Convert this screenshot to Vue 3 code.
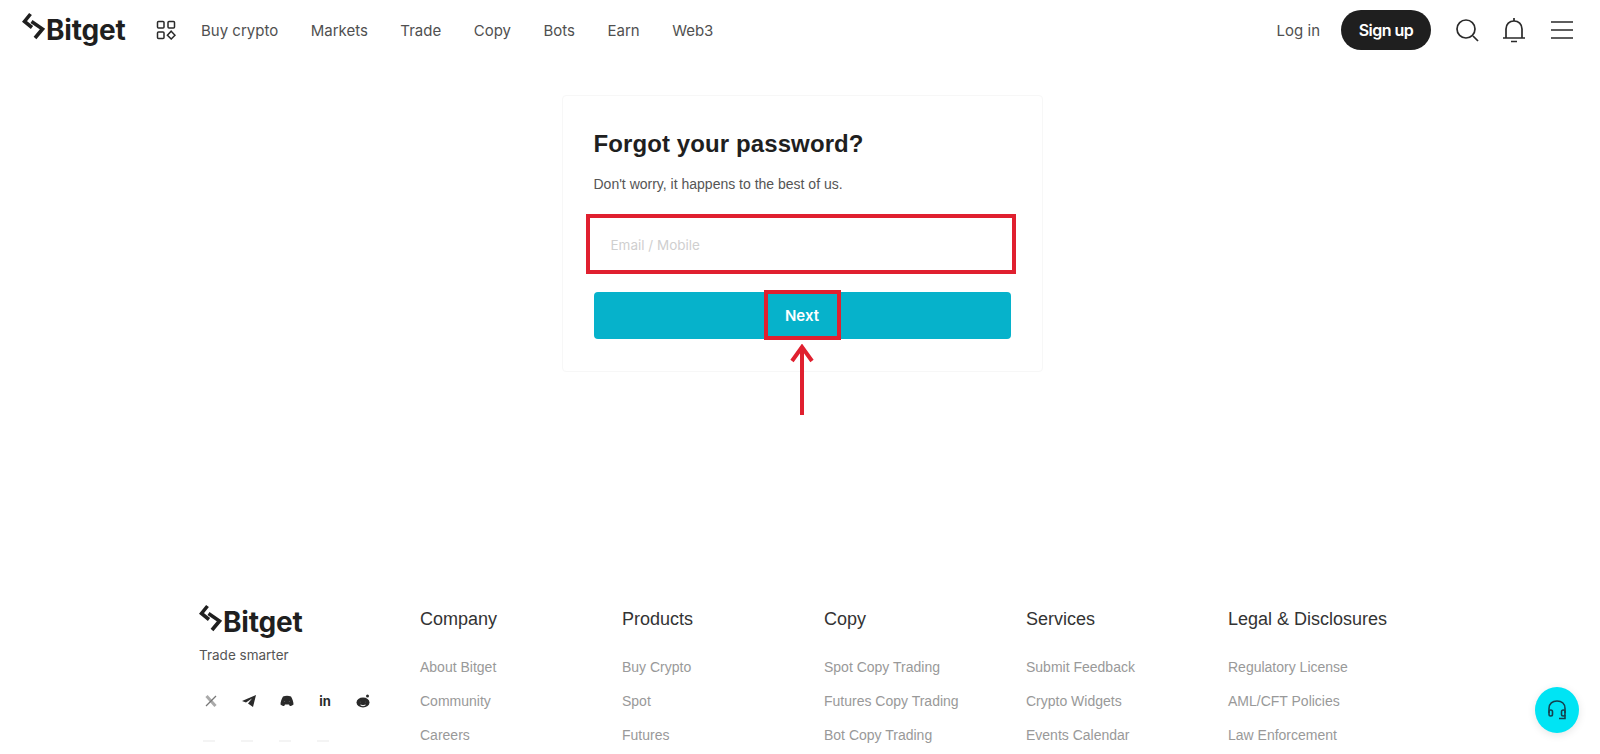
<template>
  <div class="page">
    <header class="topbar">
      <a class="logo">
        <svg class="logo-mark" viewBox="0 0 26 28" width="26" height="28">
          <path d="M8.500 2 L2.500 9.500 L10 15.500" />
          <path d="M9.500 9.500 L20.500 17 L13 26" />
        </svg>
        <span class="logo-text">Bitget</span>
      </a>
      <svg class="grid-icon" viewBox="0 0 20 20" width="20" height="20">
        <rect x="1.500" y="1.500" width="6.500" height="6.500" rx="1" />
        <rect x="12" y="1.500" width="6.500" height="6.500" rx="1" />
        <rect x="1.500" y="12" width="6.500" height="6.500" rx="1" />
        <path d="M15.200 11.200 L19 15.200 L15.200 19 L11.400 15.200 Z" />
      </svg>
      <nav class="nav">
        <a v-for="item in navItems" :key="item">{{ item }}</a>
      </nav>
      <div class="top-right">
        <a class="login">Log in</a>
        <a class="signup">Sign up</a>
        <svg class="top-icon search" viewBox="0 0 24 24" width="24" height="24">
          <circle cx="11" cy="11" r="9" />
          <path d="M18 18 L23 23" />
        </svg>
        <svg class="top-icon bell" viewBox="0 0 26 26" width="26" height="26">
          <path d="M2 21 H24 M5 21 V12 C5 7 8.500 4 13 4 C17.500 4 21 7 21 12 V21" />
          <path d="M13 1 V4 M10 24.500 H16" />
        </svg>
        <svg class="top-icon menu" viewBox="0 0 23 20" width="23" height="20">
          <path d="M0 2 H22 M0 10 H22 M0 18 H22" />
        </svg>
      </div>
    </header>

    <main class="content">
      <section class="card">
        <h1>Forgot your password?</h1>
        <p class="sub">Don't worry, it happens to the best of us.</p>
        <div class="input-wrap">
          <input class="field" placeholder="Email / Mobile" />
          <span class="mark mark-input"></span>
        </div>
        <button class="next">
          Next
          <span class="mark mark-next"></span>
        </button>
        <svg class="arrow" viewBox="0 0 30 72" width="30" height="72">
          <path d="M15 71 V3 M5 17 L15 3 L25 17" />
        </svg>
      </section>
    </main>

    <footer class="footer">
      <div class="brand">
        <a class="logo">
          <svg class="logo-mark" viewBox="0 0 26 28" width="26" height="28">
            <path d="M8.500 2 L2.500 9.500 L10 15.500" />
            <path d="M9.500 9.500 L20.500 17 L13 26" />
          </svg>
          <span class="logo-text">Bitget</span>
        </a>
        <div class="slogan">Trade smarter</div>
        <div class="socials">
          <svg viewBox="0 0 16 16" width="16" height="16" class="soc x"><path class="x-wide" d="M3.500 3 L12.500 13" /><path class="x-thin" d="M13 3 L3 13" /></svg>
          <svg viewBox="0 0 16 16" width="16" height="16" class="soc"><path class="fill" d="M15 2 L1 8 L5 9.500 L11 5.500 L7 10.500 L12 14 Z" /></svg>
          <svg viewBox="0 0 16 16" width="16" height="16" class="soc"><path class="fill" d="M4 3.500 C6.500 2.500 9.500 2.500 12 3.500 C13.500 6 14.500 9 14.500 11.500 C13 12.800 11.800 13 10.800 13 L10 11.500 H6 L5.200 13 C4.200 13 3 12.800 1.500 11.500 C1.500 9 2.500 6 4 3.500 Z" /><circle cx="5.800" cy="8.300" r="1.300" fill="#fff" /><circle cx="10.200" cy="8.300" r="1.300" fill="#fff" /></svg>
          <span class="soc-in">in</span>
          <svg viewBox="0 0 16 16" width="16" height="16" class="soc"><ellipse class="fill" cx="8" cy="9.500" rx="6.500" ry="5" /><circle class="fill" cx="12.500" cy="3" r="1.500" /><circle cx="5.500" cy="9" r="1.200" fill="#fff" /><circle cx="10.500" cy="9" r="1.200" fill="#fff" /><path d="M5.500 12 Q8 13.500 10.500 12" stroke="#fff" stroke-width="1" fill="none" /></svg>
        </div>
        <div class="socials faint">
          <span v-for="n in 4" :key="n"></span>
        </div>
      </div>
      <div v-for="col in columns" :key="col.title" class="col">
        <h3>{{ col.title }}</h3>
        <a v-for="link in col.links" :key="link">{{ link }}</a>
      </div>
    </footer>

    <div class="chat">
      <svg viewBox="0 0 24 24" width="24" height="24">
        <path d="M4 15 V10.500 C4 5.500 7.500 3 12 3 C16.500 3 20 5.500 20 10.500 V15" />
        <rect x="4" y="12" width="3.500" height="6" rx="1.700" />
        <rect x="16.500" y="12" width="3.500" height="6" rx="1.700" />
        <path d="M20 17 V20.500 H14" />
      </svg>
    </div>
  </div>
</template>

<script setup>
const navItems = ['Buy crypto', 'Markets', 'Trade', 'Copy', 'Bots', 'Earn', 'Web3']

const columns = [
  { title: 'Company', links: ['About Bitget', 'Community', 'Careers'] },
  { title: 'Products', links: ['Buy Crypto', 'Spot', 'Futures'] },
  { title: 'Copy', links: ['Spot Copy Trading', 'Futures Copy Trading', 'Bot Copy Trading'] },
  { title: 'Services', links: ['Submit Feedback', 'Crypto Widgets', 'Events Calendar'] },
  { title: 'Legal & Disclosures', links: ['Regulatory License', 'AML/CFT Policies', 'Law Enforcement'] }
]
</script>

<style>
html, body { margin: 0; background: #fff; overflow: hidden; }
</style>

<style scoped>
.page {
  position: relative;
  height: 754px;
  overflow: hidden;
  background: #fff;
  font-family: "Liberation Sans", Arial, sans-serif;
  color: #1f1f1f;
}

.topbar {
  display: flex;
  align-items: center;
  height: 60px;
  padding: 0 26px 0 22px;
  font-family: Inter, sans-serif;
}
.logo {
  display: flex;
  align-items: center;
  width: 104px;
}
.logo-mark {
  flex: none;
  margin-right: -2px;
  margin-top: -8px;
}
.logo-mark path {
  fill: none;
  stroke: #1f1f1f;
  stroke-width: 3.6;
}
.logo-text {
  font-family: Inter, sans-serif;
  font-weight: 700;
  font-size: 28px;
  line-height: 30px;
  letter-spacing: -0.2px;
  color: #1f1f1f;
}
.grid-icon {
  margin-left: 30px;
  flex: none;
}
.grid-icon rect, .grid-icon path {
  fill: none;
  stroke: #2a2a2a;
  stroke-width: 1.5;
}
.nav {
  display: flex;
  gap: 32.500px;
  margin-left: 25px;
  font-size: 15px;
  color: #505050;
}
.top-right {
  display: flex;
  align-items: center;
  margin-left: auto;
}
.login {
  font-size: 15px;
  color: #505050;
}
.signup {
  margin-left: 21px;
  width: 90px;
  height: 40px;
  border-radius: 20px;
  background: #1f1f1f;
  color: #fff;
  font-size: 16px;
  font-weight: 600;
  letter-spacing: -0.5px;
  line-height: 40px;
  text-align: center;
}
.top-icon {
  fill: none;
  stroke: #2a2a2a;
  stroke-width: 1.7;
  flex: none;
}
.search { margin-left: 24px; }
.bell { margin-left: 22px; }
.menu { margin-left: 24px; }

.content {
  display: flex;
  justify-content: center;
  padding-top: 35px;
  padding-left: 4px;
  height: 499px;
  box-sizing: border-box;
}
.card {
  position: relative;
  width: 481px;
  height: 277px;
  box-sizing: border-box;
  padding: 31px 31px;
  border: 1px solid #f7f7f7;
  border-radius: 4px;
}
h1 {
  margin: 0;
  font-size: 24px;
  line-height: 34px;
  font-weight: 700;
  color: #1f1f1f;
  letter-spacing: 0.1px;
}
.sub {
  margin: 13px 0 0;
  font-size: 14px;
  line-height: 20px;
  color: #555;
}
.input-wrap {
  position: relative;
  margin-top: 27px;
  height: 48px;
}
.field {
  width: 100%;
  height: 48px;
  box-sizing: border-box;
  border: 0;
  padding: 0 17px;
  outline: none;
  font-family: Inter, sans-serif;
  font-size: 13.500px;
}
.field::placeholder { color: #cfcfcf; }
.next {
  position: relative;
  display: block;
  width: 417px;
  height: 47px;
  margin-top: 23px;
  border: 0;
  border-radius: 4px;
  background: #06b2cb;
  color: #fff;
  font-family: Inter, sans-serif;
  font-size: 15px;
  font-weight: 600;
}
.mark {
  position: absolute;
  box-sizing: border-box;
  border: 4px solid #e0202f;
}
.mark-input {
  left: -8px;
  top: -7px;
  width: 430px;
  height: 60px;
}
.mark-next {
  left: 170px;
  top: -2px;
  width: 77px;
  height: 50px;
}
.arrow {
  position: absolute;
  left: 224px;
  top: 248px;
  fill: none;
  stroke: #e0202f;
  stroke-width: 4;
}

.footer {
  display: flex;
  padding: 48px 0 0 199px;
}
.brand {
  width: 221px;
  flex: none;
}
.slogan {
  margin-top: 8px;
  font-family: Inter, sans-serif;
  font-size: 13.500px;
  line-height: 20px;
  color: #555;
}
.socials {
  display: flex;
  align-items: center;
  gap: 22px;
  margin-top: 28px;
  padding-left: 4px;
}
.soc {
  flex: none;
  stroke: #2a2a2a;
  stroke-width: 2;
}
.soc .x-wide { stroke: #aaa; stroke-width: 3; }
.soc .x-thin { stroke: #777; stroke-width: 1.300; }
.soc .fill { fill: #2a2a2a; stroke: none; }
.soc-in {
  width: 16px;
  font-family: Inter, sans-serif;
  font-weight: 700;
  font-size: 13px;
  line-height: 16px;
  text-align: center;
  color: #2a2a2a;
}
.socials.faint {
  gap: 26px;
  margin-top: 31px;
}
.socials.faint span {
  width: 12px;
  height: 2px;
  background: #f4f4f4;
}
.col {
  width: 202px;
  flex: none;
  display: flex;
  flex-direction: column;
  align-items: flex-start;
}
.col h3 {
  margin: 0 0 19px;
  font-size: 18px;
  line-height: 24px;
  font-weight: 400;
  color: #333;
}
.col a {
  font-size: 14px;
  line-height: 34px;
  color: #999;
}

.chat {
  position: absolute;
  left: 1535px;
  top: 687px;
  width: 44px;
  height: 46px;
  border-radius: 50%;
  background: #00e4f4;
  box-shadow: 0 2px 8px rgba(0, 0, 0, 0.1);
  display: flex;
  align-items: center;
  justify-content: center;
}
.chat svg {
  fill: none;
  stroke: #14424f;
  stroke-width: 1.6;
}
</style>
